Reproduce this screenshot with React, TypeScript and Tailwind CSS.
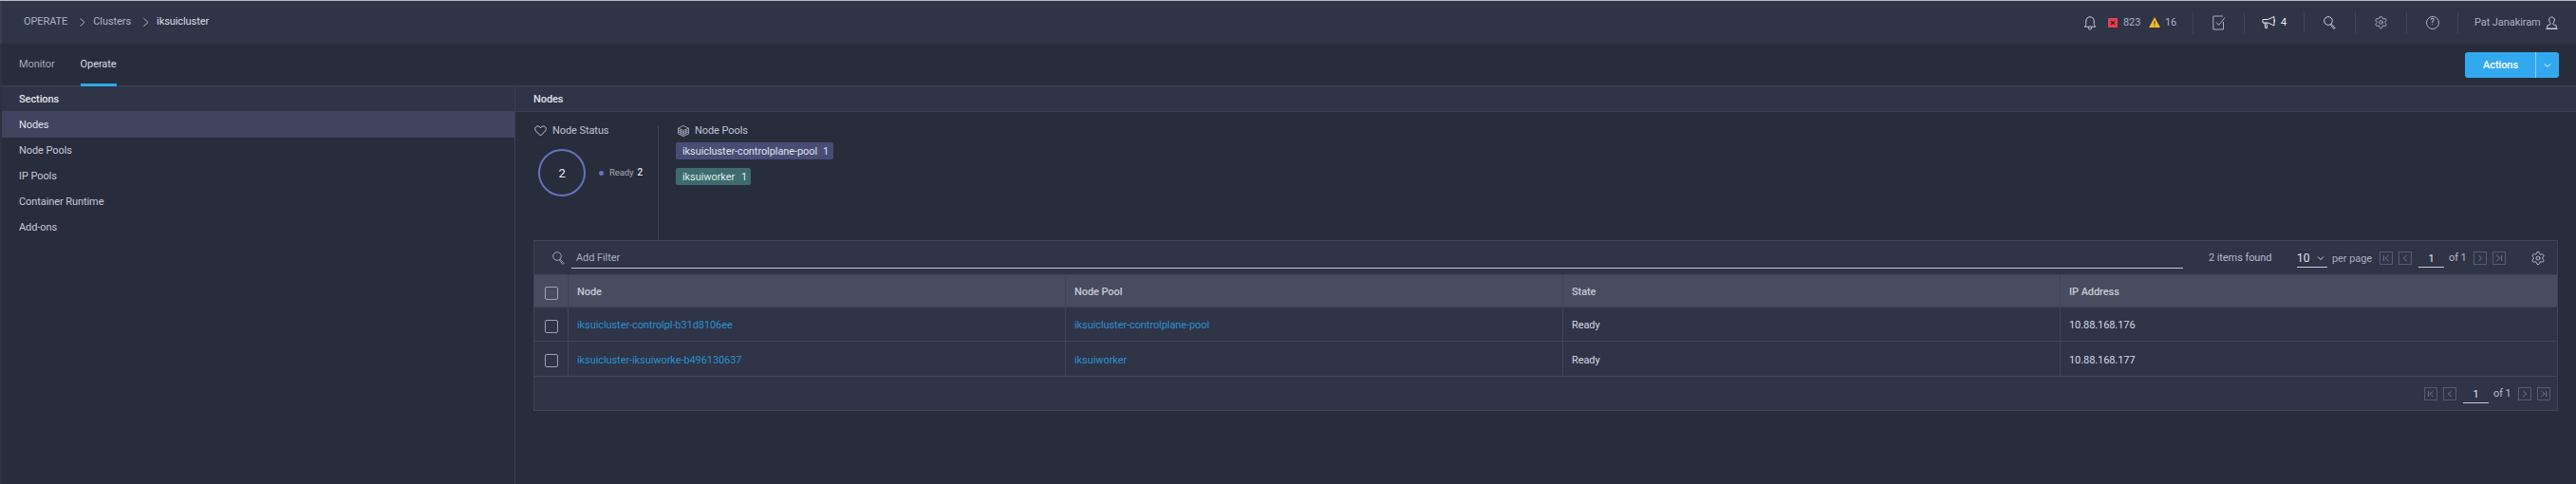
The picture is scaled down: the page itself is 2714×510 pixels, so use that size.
import { Settings } from "lucide-react";

const card = "border-[#3f4457]";

function Bell() {
  return (
    <svg width="14" height="16" viewBox="0 0 14 16" fill="none" stroke="#c9cdd8" strokeWidth="1">
      <path d="M1.2 12.2c1.1-1 1.6-2 1.6-3.6V6a4.2 4.2 0 0 1 8.4 0v2.6c0 1.600.5 2.600 1.600 3.600z" />
      <path d="M5.4 12.6v.8a1.600 1.600 0 0 0 3.200 0v-.8" />
    </svg>
  );
}

function ErrorBox() {
  return (
    <svg width="10" height="10" viewBox="0 0 10 10">
      <rect width="10" height="10" fill="#e2404d" />
      <path d="M3.200 3.200l3.600 3.600M6.800 3.200l-3.600 3.600" stroke="#3c1620" strokeWidth="1.300" />
    </svg>
  );
}

function TaskIcon() {
  return (
    <svg width="14" height="16" viewBox="0 0 14 16" fill="none" stroke="#aab0c2" strokeWidth="1">
      <path d="M11.500 7V15H.8V1H11" />
      <path d="M4 7.500l2.600 3L13 2.500" />
    </svg>
  );
}

function Megaphone() {
  return (
    <svg width="15" height="15" viewBox="0 0 15 15" fill="none" stroke="#e7e9ef" strokeWidth="1">
      <path d="M1 4.500h5.500L13 1.500v9.500L6.500 8H1z" />
      <path d="M3 8l.8 5.500h1.700L5 8" />
      <path d="M13.500 4.500v3" />
    </svg>
  );
}

function SearchIcon({ color = "#c9cdd8" }: { color?: string }) {
  return (
    <svg width="13" height="14" viewBox="0 0 13 14" fill="none" stroke={color} strokeWidth="1">
      <circle cx="5" cy="5" r="4.300" />
      <path d="M8.200 8.200l3.800 4.300-1 1-3.600-4.200" />
    </svg>
  );
}

function UserIcon() {
  return (
    <svg width="13" height="14" viewBox="0 0 13 14" fill="none" stroke="#c9cdd8" strokeWidth="1">
      <path d="M6.500 1C4.700 1 3.700 2.300 3.700 4c0 1.500.7 2.700 1.300 3.300v1.400L1.700 10v3h9.600v-3L8 8.700V7.300C8.600 6.700 9.300 5.500 9.300 4 9.300 2.300 8.300 1 6.500 1z" />
      <path d="M.5 13.500h12" />
    </svg>
  );
}

function Heart() {
  return (
    <svg width="13" height="12" viewBox="0 0 13 12" fill="none" stroke="#c4c8d6" strokeWidth="1">
      <path d="M6.500 11L1.500 6C-.2 4 1 1 3.500 1c1.300 0 2.300.7 3 1.700C7.200 1.700 8.200 1 9.500 1 12 1 13.200 4 11.500 6z" />
    </svg>
  );
}

function PoolIcon() {
  return (
    <svg width="12" height="12" viewBox="0 0 12 12" fill="none" stroke="#aab0c2" strokeWidth="0.800">
      <path d="M6 .5L11.500 3v6L6 11.500.5 9V3z" />
      <path d="M.5 3L6 5.500 11.500 3M.5 5L6 7.500 11.500 5M.5 7L6 9.500 11.500 7M6 5.500v6M3.200 4.200v6M8.800 4.200v6" />
    </svg>
  );
}

function PageBtn({ kind }: { kind: "first" | "prev" | "next" | "last" }) {
  const d = {
    first: "M4 3.500v7M10 3.500L6 7l4 3.500",
    prev: "M9 3.500L5 7l4 3.500",
    next: "M5 3.500L9 7l-4 3.500",
    last: "M10 3.500v7M4 3.500L8 7l-4 3.500",
  }[kind];
  return (
    <span className="flex h-[14px] w-[14px] items-center justify-center border border-[#565c70]">
      <svg width="12" height="12" viewBox="0 0 14 14" fill="none" stroke="#7b8196" strokeWidth="1">
        <path d={d} />
      </svg>
    </span>
  );
}

function Pager() {
  return (
    <div className="flex items-center">
      <div className="flex gap-[6px]">
        <PageBtn kind="first" />
        <PageBtn kind="prev" />
      </div>
      <span className="ml-[7px] flex h-[20px] w-[27px] items-center justify-center border-b border-[#c4c9dc] pt-[2px] text-[11px] text-[#e4e6ee]">
        1
      </span>
      <span className="ml-[5px] mr-[9px] w-[17px] whitespace-nowrap text-[11px] text-[#b6bac8]">of 1</span>
      <div className="flex gap-[6px]">
        <PageBtn kind="next" />
        <PageBtn kind="last" />
      </div>
    </div>
  );
}

function Sep({ h = "h-[22px]" }: { h?: string }) {
  return <span className={`w-px bg-[#40455a] ${h}`} />;
}

function Checkbox() {
  return <span className="mt-[4px] block h-[14px] w-[14px] rounded-[2px] border border-[#9ea3b5]" />;
}

function Chevron() {
  return (
    <svg width="8" height="12" viewBox="0 0 8 12" fill="none" stroke="#aab0c2" strokeWidth="1">
      <path d="M1.500 2.500L6 6.500l-4.500 4" />
    </svg>
  );
}

const rows = [
  { node: "iksuicluster-controlpl-b31d8106ee", pool: "iksuicluster-controlplane-pool", ip: "10.88.168.176", h: "h-[36px]" },
  { node: "iksuicluster-iksuiworke-b496130637", pool: "iksuiworker", ip: "10.88.168.177", h: "h-[37px]" },
];

const sections = ["Node Pools", "IP Pools", "Container Runtime", "Add-ons"];

export default function App() {
  return (
    <div className="h-[510px] w-[2714px] overflow-hidden border-t border-t-[#b9bbc0] bg-[#282d3c] font-['Roboto',sans-serif] text-[11px] leading-none tracking-[-0.08px] text-[#d5d8e2]">
      {/* top bar */}
      <header className="flex h-[45px] items-center justify-between border-l-2 border-l-[#3a3f50] bg-[#2f3447] pl-[23px] pr-[19px]">
        <nav className="flex items-center pb-[2px] text-[11px] text-[#aeb2c1]">
          <span>OPERATE</span>
          <span className="ml-[12px] mr-[7px]"><Chevron /></span>
          <span>Clusters</span>
          <span className="ml-[12px] mr-[7px]"><Chevron /></span>
          <span className="text-[#dcdee6]">iksuicluster</span>
        </nav>
        <div className="flex h-[23px] items-center text-[#aeb2c1]">
          <Bell />
          <span className="ml-[12px] flex"><ErrorBox /></span>
          <span className="ml-[6px] w-[27px]">823</span>
          <svg width="12" height="11" viewBox="0 0 12 11">
            <path d="M6 0l6 11H0z" fill="#f5b92c" />
            <path d="M6 4v3.500M6 8.500v1" stroke="#3a3320" strokeWidth="1" />
          </svg>
          <span className="ml-[5px] w-[29px]">16</span>
          <Sep />
          <span className="flex w-[53px] justify-center"><TaskIcon /></span>
          <Sep />
          <span className="flex w-[62px] items-center justify-center gap-[5px] text-[#e7e9ef]">
            <Megaphone />
            4
          </span>
          <Sep />
          <span className="flex w-[53px] justify-center"><SearchIcon /></span>
          <Sep />
          <span className="flex w-[53px] justify-center"><Settings size={15} strokeWidth={1.500} color="#b6bac8" /></span>
          <Sep />
          <span className="flex w-[53px] justify-center">
            <span className="flex h-[14px] w-[14px] items-center justify-center rounded-full border border-[#aab0c2] text-[9px] text-[#c9cdd8]">?</span>
          </span>
          <Sep />
          <span className="ml-[17px] mr-[7px] w-[68px] whitespace-nowrap">Pat Janakiram</span>
          <UserIcon />
        </div>
      </header>

      {/* tabs */}
      <div className="flex h-[45px] items-stretch justify-between border-b border-l-2 border-b-[#3b4053] border-l-[#2d3142] pl-[18px] pr-[18px]">
        <div className="flex gap-[27px]">
          <span className="flex items-center pb-[2px] text-[#a3a7b8]">Monitor</span>
          <span className="-mb-px flex w-[38px] items-center border-b-[3px] border-[#2fa8ee] text-[#d8dbe4]">Operate</span>
        </div>
        <div className="flex items-center pt-[1px]">
          <button className="flex h-[27px] w-[99px] items-center rounded-[3px] bg-[#32a9ee] text-[11px] font-medium text-white">
            <span className="flex h-full w-[74px] items-center justify-center pl-[1px]">Actions</span>
            <span className="flex h-full flex-1 items-center justify-center border-l border-[#8fd0f6]">
              <svg width="8" height="6" viewBox="0 0 8 6" fill="none" stroke="#fff" strokeWidth="1">
                <path d="M1 1.500l3 3 3-3" />
              </svg>
            </span>
          </button>
        </div>
      </div>

      <div className="flex h-[419px]">
        {/* sections */}
        <aside className="w-[543px] shrink-0 border-l-2 border-r border-l-[#2d3142] border-r-[#3b4053]">
          <div className="flex h-[26px] items-center bg-[#2f3447] pl-[18px] font-medium text-[#e0e2ea]">Sections</div>
          <div className="flex h-[28px] items-center bg-[#40445f] pl-[18px] text-[#dfe1ea]">Nodes</div>
          {sections.map((s) => (
            <div key={s} className="flex h-[27px] items-center pl-[18px] text-[#c6c9d6]">
              {s}
            </div>
          ))}
        </aside>

        {/* nodes */}
        <main className="min-w-0 flex-1">
          <div className="flex h-[27px] items-center border-b border-[#3b4053] bg-[#2f3447] pl-[19px] font-medium text-[#e0e2ea]">Nodes</div>

          <div className="flex h-[135px] pl-[20px] pt-[14px]">
            <div className="w-[131px] shrink-0 border-r border-[#40455a]">
              <div className="flex items-center gap-[6px] text-[#bfc3d2]">
                <Heart />
                <span className="-mt-[1px]">Node Status</span>
              </div>
              <div className="mt-[13px] flex items-center pl-[4px]">
                <div className="flex h-[50px] w-[50px] items-center justify-center rounded-full border-2 border-[#6571bd] text-[13px] text-[#e7e9ef]">2</div>
                <span className="ml-[14px] h-[5px] w-[5px] rounded-full bg-[#6571bd]" />
                <span className="ml-[6px] text-[9.500px] text-[#a5a9b9]">Ready</span>
                <span className="ml-[4px] text-[10px] font-medium text-[#dfe1ea]">2</span>
              </div>
            </div>
            <div className="pl-[18px]">
              <div className="flex items-center gap-[6px] pl-[2px] text-[#bfc3d2]">
                <PoolIcon />
                <span className="-mt-[1px]">Node Pools</span>
              </div>
              <div className="mt-[6px] flex h-[18px] w-[166px] items-center rounded-[2px] bg-[#474d75] pl-[7px] text-[#dfe1ea]">
                iksuicluster-controlplane-pool<span className="ml-[6px]">1</span>
              </div>
              <div className="mt-[9px] flex h-[18px] w-[79px] items-center rounded-[2px] bg-[#3d6b6e] pl-[7px] text-[#dfe9ea]">
                iksuiworker<span className="ml-[7px]">1</span>
              </div>
            </div>
          </div>

          {/* table */}
          <div className={`ml-[19px] w-[2133px] border ${card} bg-[#2f3447]`}>
            <div className="flex h-[35px] items-center">
              <span className="ml-[19px] flex"><SearchIcon color="#9fa4b6" /></span>
              <div className="ml-[7px] flex h-[22px] w-[1698px] items-center border-b border-[#c4c9dc] pl-[5px] pt-[1px] text-[#a9adbd]">Add Filter</div>
              <span className="ml-[14px]"><Sep /></span>
              <span className="ml-[13px] w-[66px] whitespace-nowrap text-[#b6bac8]">2 items found</span>
              <span className="ml-[14px]"><Sep /></span>
              <div className="ml-[13px] flex h-[20px] w-[32px] items-center justify-between border-b border-[#c4c9dc] pr-[3px] pt-[2px] text-[12px] text-[#e4e6ee]">
                10
                <svg width="8" height="6" viewBox="0 0 8 6" fill="none" stroke="#c9cdd8" strokeWidth="1">
                  <path d="M1 1.500l3 3 3-3" />
                </svg>
              </div>
              <span className="ml-[5px] mr-[9px] mt-[2px] w-[41px] whitespace-nowrap text-[#a9adbd]">per page</span>
              <Pager />
              <span className="ml-[16px]"><Sep /></span>
              <span className="ml-[10px] flex"><Settings size={16} strokeWidth={1.300} color="#c4c8d6" /></span>
            </div>

            <div className="flex h-[35px] items-center border-y border-[#3f4457] bg-[#474c60] font-medium text-[#c6c9d6]">
              <div className="flex h-full w-[36px] items-center justify-center border-r border-[#3f4457]"><Checkbox /></div>
              <div className="flex h-full w-[524px] items-center border-r border-[#3f4457] pl-[9px] pt-[2px]">Node</div>
              <div className="flex h-full w-[524px] items-center border-r border-[#3f4457] pl-[9px] pt-[2px]">Node Pool</div>
              <div className="flex h-full w-[524px] items-center border-r border-[#3f4457] pl-[9px] pt-[2px]">State</div>
              <div className="flex h-full flex-1 items-center pl-[9px] pt-[2px]">IP Address</div>
            </div>

            {rows.map((r) => (
              <div key={r.node} className={`flex items-center border-b border-[#3f4457] ${r.h}`}>
                <div className="flex h-full w-[36px] items-center justify-center border-r border-[#3f4457]"><Checkbox /></div>
                <div className="flex h-full w-[524px] items-center border-r border-[#3f4457] pl-[9px] pt-[2px] text-[#2a90cf]">{r.node}</div>
                <div className="flex h-full w-[524px] items-center border-r border-[#3f4457] pl-[9px] pt-[2px] text-[#2a90cf]">{r.pool}</div>
                <div className="flex h-full w-[524px] items-center border-r border-[#3f4457] pl-[9px] pt-[2px] text-[#d5d8e2]">Ready</div>
                <div className="flex h-full flex-1 items-center pl-[9px] pt-[2px]">{r.ip}</div>
              </div>
            ))}

            <div className="flex h-[35px] items-center justify-end pr-[7px]">
              <Pager />
            </div>
          </div>
        </main>
      </div>
    </div>
  );
}
